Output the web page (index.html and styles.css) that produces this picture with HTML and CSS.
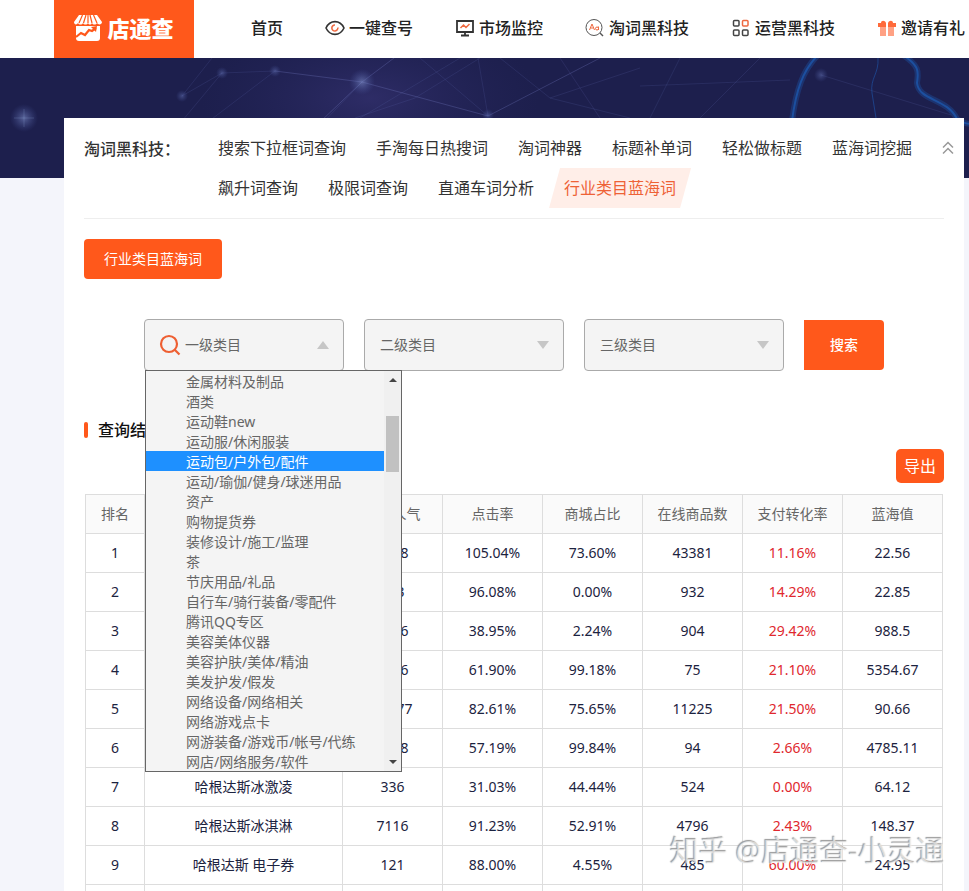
FILE: index.html
```html
<!DOCTYPE html>
<html lang="zh-CN">
<head>
<meta charset="utf-8">
<meta name="viewport" content="width=device-width, initial-scale=1">
<title>店通查</title>
<link rel="stylesheet" href="styles.css">
</head>
<body>
<header class="topbar">
  <a class="logo" href="#">
    <svg width="28" height="28" viewBox="0 0 28 28" aria-hidden="true">
      <path fill="#fff" d="M5 1h18l5 7c0 3-4 3-5 1-1 2-4 2-5 0-1 2-3 2-4 0-1 2-4 2-5 0-1 2-4 2-5 0-1 2-4 2-4-1z"/>
      <path stroke="#ff581b" stroke-width="1.2" d="M8.500 1 5 9M12 1 9.500 9M16 1l2 8M19.500 1l3.500 8M14 1v8" fill="none"/>
      <path fill="#fff" d="M2 12h24v12q0 3-3 3H5q-3 0-3-3z"/>
      <path fill="none" stroke="#ff581b" stroke-width="2.200" d="m2 23 5-4 4 2 4-5 3 1 4-3"/>
      <path fill="#ff581b" d="m17 13 6-1-1 6z"/>
    </svg>
    <span>店通查</span>
  </a>
  <nav class="nav">
    <a href="#">首页</a>
    <a href="#">
      <svg width="20" height="20" viewBox="0 0 20 20" fill="none" aria-hidden="true"><path d="M1 10c4-8.500 14-8.500 18 0-4 8.500-14 8.500-18 0z" stroke="#333" stroke-width="1.600"/><path d="M12.800 9.500a3 3 0 1 1-2.800-2.500" stroke="#ee6a41" stroke-width="1.600"/></svg>
      一键查号</a>
    <a href="#">
      <svg width="20" height="20" viewBox="0 0 20 20" fill="none" aria-hidden="true"><path d="M2 3h16v11H2zM10 14v3M6 17.500h8" stroke="#333" stroke-width="1.800"/><path d="m5.500 10 3-3 2.500 2.500L14.500 6" stroke="#ee6a41" stroke-width="1.500"/></svg>
      市场监控</a>
    <a href="#">
      <svg width="20" height="20" viewBox="0 0 20 20" fill="none" aria-hidden="true"><circle cx="9" cy="9.500" r="8" stroke="#555"/><path d="m15 15 3 3" stroke="#555" stroke-width="1.400"/><path d="m4.500 12 2.500-6 2.500 6M5.500 10h3M13.500 8.500V12" stroke="#ee6a41"/><circle cx="12" cy="10.500" r="1.500" stroke="#ee6a41"/></svg>
      淘词黑科技</a>
    <a href="#">
      <svg width="20" height="20" viewBox="0 0 20 20" fill="none" stroke="#444" stroke-width="1.500" aria-hidden="true"><rect x="2.500" y="2.500" width="5.500" height="5.500" rx="1"/><rect x="11.500" y="2.500" width="5.500" height="5.500" rx="1" stroke="#ee6a41"/><rect x="2.500" y="12" width="5.500" height="5.500" rx="1"/><rect x="11.500" y="12" width="5.500" height="5.500" rx="1"/></svg>
      运营黑科技</a>
    <a href="#">
      <svg width="20" height="20" viewBox="0 0 20 20" aria-hidden="true"><path fill="#ff6a3a" d="M1 5h3c0-3 4-3 5 0v4H1zM11 5c1-3 5-3 5 0h3v4h-8z"/><path fill="#ffa184" d="M3 9h6v9H3zM11 9h6v9h-6z"/></svg>
      邀请有礼</a>
  </nav>
</header>

<div class="banner">
  <svg width="100%" height="120" viewBox="0 0 969 120" preserveAspectRatio="xMidYMid slice" fill="none" aria-hidden="true">
    <defs>
      <radialGradient id="star"><stop offset="0" stop-color="#7f8fca" stop-opacity=".6"/><stop offset="1" stop-color="#4757a0" stop-opacity="0"/></radialGradient>
      <radialGradient id="dot"><stop offset="0" stop-color="#6574b5" stop-opacity=".5"/><stop offset="1" stop-color="#4757a0" stop-opacity="0"/></radialGradient>
      <radialGradient id="haze"><stop offset="0" stop-color="#3f3a80" stop-opacity=".5"/><stop offset="1" stop-color="#2b2b68" stop-opacity="0"/></radialGradient>
    </defs>
    <ellipse cx="370" cy="40" rx="170" ry="80" fill="url(#haze)"/>
    <path stroke="#5a62a8" stroke-opacity=".2" d="m362 24-50 52M275 13l-53 2-40 23M182 38l30-38M275 13 200 70M222 15l-50 60M488 58 420 0M488 58l-10-58M415 40 480 0M415 40l-60 20M550 40l-50-40M550 40l80 20M550 40l90-30M640 28l150-6M650 60l30-60M821 17l130 40M700 60l60-60M360 60l100-60M600 60 560 0"/>
    <path stroke="#6a70b4" stroke-opacity=".35" d="M275 13l87 11 126 34L600 0M362 24l40-30M362 24l-42 40"/>
    <circle cx="362" cy="24" r="13" fill="url(#star)"/>
    <circle cx="24" cy="60" r="14" fill="url(#star)"/>
    <path stroke="#8d9fd2" stroke-opacity=".25" d="M14 60h20M24 51v18"/>
    <circle cx="222" cy="15" r="6" fill="url(#dot)"/>
    <circle cx="275" cy="13" r="6" fill="url(#dot)"/>
    <circle cx="182" cy="38" r="6" fill="url(#dot)"/>
    <circle cx="821" cy="17" r="7" fill="url(#dot)"/>
    <circle cx="488" cy="57" r="6" fill="url(#dot)"/>
    <g stroke="#1d62c0">
      <path stroke-opacity=".3" stroke-width="6" d="M818-3c-15 15-22 35-26 66M903-3c18 12 15 18 14 28 2 18 30 15 40 36 6 5 12 5 20 5"/>
      <path stroke-opacity=".6" stroke-width="2" d="M818-3c-15 15-22 35-26 66M903-3c18 12 15 18 14 28 2 18 30 15 40 36 6 5 12 5 20 5"/>
      <path stroke-opacity=".5" d="M878 0c1 16-8 20-6 35l4 25"/>
    </g>
  </svg>
</div>

<main class="panel">
  <section class="submenu">
    <h2>淘词黑科技<span class="colon">：</span></h2>
    <nav class="links">
      <a href="#">搜索下拉框词查询</a>
      <a href="#">手淘每日热搜词</a>
      <a href="#">淘词神器</a>
      <a href="#">标题补单词</a>
      <a href="#">轻松做标题</a>
      <a href="#">蓝海词挖掘</a>
      <a href="#">飙升词查询</a>
      <a href="#">极限词查询</a>
      <a href="#">直通车词分析</a>
      <a href="#" class="current">行业类目蓝海词</a>
    </nav>
    <button class="fold" type="button" aria-label="收起">
      <svg width="12" height="14" viewBox="0 0 12 14" fill="none" stroke="#999" stroke-width="1.500" aria-hidden="true"><path d="m1 6.500 5-5 5 5M1 12.500l5-5 5 5"/></svg>
    </button>
  </section>

  <button class="tab" type="button">行业类目蓝海词</button>

  <form class="filters">
    <div class="field first">
      <svg class="lens" width="22" height="22" viewBox="0 0 22 22" fill="none" stroke="#ee5f32" stroke-width="2.200" aria-hidden="true"><circle cx="10" cy="10" r="8"/><path d="m15.500 15.500 5 5"/></svg>
      <select class="picker" aria-label="一级类目"><option>一级类目</option></select>
      <span class="arrow up"></span>
      <div class="popup">
        <select class="choices" size="20" aria-label="一级类目选项">
          <option>金属材料及制品</option>
          <option>酒类</option>
          <option>运动鞋new</option>
          <option>运动服/休闲服装</option>
          <option class="active">运动包/户外包/配件</option>
          <option>运动/瑜伽/健身/球迷用品</option>
          <option>资产</option>
          <option>购物提货券</option>
          <option>装修设计/施工/监理</option>
          <option>茶</option>
          <option>节庆用品/礼品</option>
          <option>自行车/骑行装备/零配件</option>
          <option>腾讯QQ专区</option>
          <option>美容美体仪器</option>
          <option>美容护肤/美体/精油</option>
          <option>美发护发/假发</option>
          <option>网络设备/网络相关</option>
          <option>网络游戏点卡</option>
          <option>网游装备/游戏币/帐号/代练</option>
          <option>网店/网络服务/软件</option>
        </select>
        <div class="scroll" aria-hidden="true"><i class="tip top"></i><i class="thumb"></i><i class="tip bottom"></i></div>
      </div>
    </div>
    <div class="field">
      <select class="picker" aria-label="二级类目"><option>二级类目</option></select>
      <span class="arrow"></span>
    </div>
    <div class="field">
      <select class="picker" aria-label="三级类目"><option>三级类目</option></select>
      <span class="arrow"></span>
    </div>
    <button class="search" type="submit">搜索</button>
  </form>

  <h3 class="heading">查询结果</h3>
  <div class="actions"><button class="export" type="button">导出</button></div>

  <table class="results">
    <colgroup><col class="rank"><col class="word"><col><col><col><col><col><col></colgroup>
    <thead>
      <tr><th>排名</th><th>关键词</th><th>搜索人气</th><th>点击率</th><th>商城占比</th><th>在线商品数</th><th>支付转化率</th><th>蓝海值</th></tr>
    </thead>
    <tbody>
      <tr><td>1</td><td></td><td>1208</td><td>105.04%</td><td>73.60%</td><td>43381</td><td class="rate">11.16%</td><td>22.56</td></tr>
      <tr><td>2</td><td></td><td>153</td><td>96.08%</td><td>0.00%</td><td>932</td><td class="rate">14.29%</td><td>22.85</td></tr>
      <tr><td>3</td><td></td><td>1126</td><td>38.95%</td><td>2.24%</td><td>904</td><td class="rate">29.42%</td><td>988.5</td></tr>
      <tr><td>4</td><td></td><td>1136</td><td>61.90%</td><td>99.18%</td><td>75</td><td class="rate">21.10%</td><td>5354.67</td></tr>
      <tr><td>5</td><td></td><td>12477</td><td>82.61%</td><td>75.65%</td><td>11225</td><td class="rate">21.50%</td><td>90.66</td></tr>
      <tr><td>6</td><td></td><td>1218</td><td>57.19%</td><td>99.84%</td><td>94</td><td class="rate">2.66%</td><td>4785.11</td></tr>
      <tr><td>7</td><td>哈根达斯冰激凌</td><td>336</td><td>31.03%</td><td>44.44%</td><td>524</td><td class="rate">0.00%</td><td>64.12</td></tr>
      <tr><td>8</td><td>哈根达斯冰淇淋</td><td>7116</td><td>91.23%</td><td>52.91%</td><td>4796</td><td class="rate">2.43%</td><td>148.37</td></tr>
      <tr><td>9</td><td>哈根达斯 电子券</td><td>121</td><td>88.00%</td><td>4.55%</td><td>485</td><td class="rate">60.00%</td><td>24.95</td></tr>
      <tr><td></td><td></td><td></td><td></td><td></td><td></td><td></td><td></td></tr>
    </tbody>
  </table>
</main>
<div class="watermark">知乎 @店通查-小灵通</div>
</body>
</html>
```
FILE: styles.css
```css
* { box-sizing: border-box; }

body {
  position: relative;
  height: 100vh;
  margin: 0;
  overflow: hidden;
  background: #f4f5fb;
  color: #333;
  font: 14px/20px "Noto Sans", "Noto Sans CJK SC", sans-serif;
}

a { color: inherit; text-decoration: none; }

button, select { font: inherit; cursor: pointer; }

button {
  padding: 0;
  border: 0;
  background: #ff581b;
  color: #fff;
}

.topbar {
  display: flex;
  height: 58px;
  padding-left: 54px;
  background: #fff;
}

.logo {
  display: flex;
  flex: none;
  align-items: center;
  justify-content: center;
  gap: 5px;
  width: 140px;
  padding-bottom: 2px;
  background: #ff581b;
  color: #fff;
  font-size: 22px;
  font-weight: 900;
}

.nav {
  display: flex;
  align-items: center;
  gap: 42px;
  margin-left: 57px;
  padding-bottom: 2px;
  color: #222;
  font-size: 16px;
  font-weight: 500;
  white-space: nowrap;
}

.nav a { display: flex; align-items: center; gap: 4px; }

.banner { height: 120px; overflow: hidden; background: #1d1f4d; }

.panel {
  position: relative;
  margin: -60px 5px 0 64px;
  padding: 10px 20px;
  background: #fff;
}

.submenu {
  display: flex;
  padding-bottom: 10px;
  border-bottom: 1px solid #eee;
  font-size: 16px;
  line-height: 40px;
}

.submenu h2 {
  flex: none;
  width: 119px;
  margin: 0;
  font-size: 16px;
  font-weight: 500;
  white-space: nowrap;
}

.colon { font-family: "Noto Sans CJK TC", sans-serif; }

.links { display: flex; flex: 1; flex-wrap: wrap; }

.links a { padding: 0 15px; }

.links .current {
  background: #ffeee8;
  color: #ee6236;
  clip-path: polygon(11px 0, 100% 0, calc(100% - 11px) 100%, 0 100%);
}

.fold {
  display: flex;
  align-items: center;
  height: 40px;
  margin-right: -10px;
  background: none;
}

.tab {
  display: block;
  width: 138px;
  height: 40px;
  margin-top: 20px;
  border-radius: 4px;
}

.filters {
  display: flex;
  align-items: center;
  gap: 20px;
  margin: 40px 0 0 60px;
}

.field { position: relative; width: 200px; }

.picker {
  display: block;
  width: 100%;
  height: 52px;
  padding: 0 15px;
  appearance: none;
  border: 1px solid #aaa;
  border-radius: 4px;
  background: #f4f4f4;
  color: #666;
}

.first .picker { padding-left: 40px; }

.lens { position: absolute; top: 15px; left: 15px; }

.arrow {
  position: absolute;
  top: 22px;
  right: 15px;
  border: 6px solid transparent;
  border-top: 8px solid #c6c6c6;
  border-bottom: 0;
}

.arrow.up { border-top: 0; border-bottom: 8px solid #c6c6c6; }

.popup {
  position: absolute;
  z-index: 2;
  top: 51px;
  left: 1px;
  display: flex;
  width: 257px;
  border: 1px solid #666;
  background: #f4f4f4;
}

.choices {
  flex: 1;
  height: 400px;
  padding: 0;
  overflow: hidden;
  border: 0;
  outline: 0;
  border-radius: 0;
  background: #f4f4f4;
  color: #666;
}

.choices option {
  height: 20px;
  padding: 0 0 0 40px;
  line-height: 18px;
}

.choices .active { background: #1e90ff; color: #fff; }

.scroll {
  display: flex;
  flex-direction: column;
  align-items: center;
  width: 17px;
  padding: 7px 0;
  background: #f0f0f0;
}

.thumb { width: 13px; height: 56px; margin-top: 34px; background: #c1c1c1; }

.tip { border: 4px solid transparent; }
.tip.top { border-top: 0; border-bottom-color: #444; }
.tip.bottom { margin-top: auto; border-bottom: 0; border-top-color: #444; }

.search {
  width: 80px;
  height: 50px;
  border-radius: 0 4px 4px 0;
  font-weight: 500;
}

.heading {
  display: flex;
  align-items: center;
  gap: 10px;
  margin: 49px 0 0;
  color: #111;
  font-size: 16px;
  font-weight: 500;
}

.heading::before {
  width: 4px;
  height: 16px;
  border-radius: 2px;
  background: #ff581b;
  content: "";
}

.actions { display: flex; justify-content: flex-end; margin: 9px 0 11px; }

.export { width: 48px; height: 34px; border-radius: 5px; font-size: 16px; }

.results {
  width: calc(100% - 2px);
  margin-left: 1px;
  border-collapse: collapse;
  table-layout: fixed;
  color: #1c2340;
  text-align: center;
}

.rank { width: 59px; }
.word { width: 198px; }

.results th, .results td {
  height: 39px;
  padding: 0;
  border: 1px solid #ddd;
}

.results th { background: #fafafa; color: #666; font-weight: 400; }

.results .rate { color: #e0282e; }

.watermark {
  position: absolute;
  top: 831px;
  right: 24px;
  color: rgba(255, 255, 255, 0.6);
  font-size: 29px;
  line-height: 40px;
  text-shadow: -1px -1px 1px #999;
  white-space: nowrap;
}
```
